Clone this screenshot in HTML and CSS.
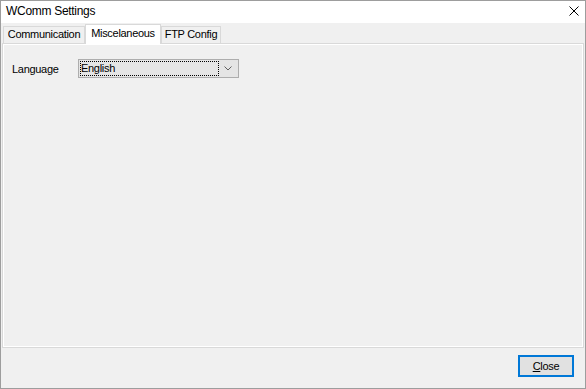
FILE: index.html
```html
<!DOCTYPE html>
<html lang="en">
<head>
    <meta charset="UTF-8">
    <title>WComm Settings</title>
    <link rel="stylesheet" href="styles.css">
</head>
<body>
    <div class="window">
        <div class="titlebar">
            <span class="title">WComm Settings</span>
            <svg class="close-x" width="10" height="10" viewBox="0 0 10 10">
                <path d="M0.5 0.5 L9.5 9.5 M9.5 0.5 L0.5 9.5" stroke="#000" stroke-width="1" fill="none"/>
            </svg>
        </div>

        <!-- tab headers -->
        <div class="tabs">
            <div class="tab tab-comm">Communication</div>
            <div class="tab tab-misc active">Miscelaneous</div>
            <div class="tab tab-ftp">FTP Config</div>
        </div>

        <div class="page">
            <div class="field">
                <label class="field-label">Language</label>
                <div class="combo">
                    <span class="combo-value">English</span>
                    <svg class="combo-arrow" width="8" height="5" viewBox="0 0 8 5">
                        <polyline points="0.5,0.5 4,4 7.5,0.5" stroke="#606060" stroke-width="1" fill="none"/>
                    </svg>
                </div>
            </div>
        </div>

        <div class="footer">
            <button class="btn-close"><u>C</u>lose</button>
        </div>
    </div>
</body>
</html>
```

FILE: styles.css
```css
* {
    box-sizing: border-box;
}

body {
    margin: 0;
    font-family: 'Liberation Sans', Arial, sans-serif;
    font-size: 11px;
    letter-spacing: -0.3px;
    color: #000;
    background: #f0f0f0;
}

.window {
    width: 586px;
    height: 389px;
    border: 1px solid #9d9d9d;
    background: #f0f0f0;
    display: flex;
    flex-direction: column;
}

.titlebar {
    height: 22px;
    flex: none;
    background: #fff;
    display: flex;
    justify-content: space-between;
    padding: 0 6px 0 5px;
}

.title {
    font-size: 12px;
    line-height: 21px;
}

.close-x {
    margin-top: 5px;
}

.tabs {
    height: 19px;
    flex: none;
    margin-top: 1px;
    padding-left: 2px;
    display: flex;
    align-items: flex-end;
}

.tab {
    height: 17px;
    border: 1px solid #d9d9d9;
    border-bottom: none;
    background: #f0f0f0;
    text-align: center;
    line-height: 15px;
}

.tab.active {
    height: 20px;
    margin-bottom: -1px;
    background: #fff;
    line-height: 16px;
    padding-bottom: 2px;
    position: relative;
    z-index: 1;
}

.tab-comm { width: 82px; }
.tab-misc { width: 76px; }
.tab-ftp { width: 60px; }

.page {
    flex: 1;
    margin: 0 1px;
    border: 1px solid #d9d9d9;
    box-shadow: inset 0 0 0 1px #fff;
    padding: 15px 0 0 9px;
}

.field {
    display: flex;
    align-items: center;
}

.field-label {
    width: 66px;
}

.combo {
    width: 161px;
    height: 19px;
    border: 1px solid #adadad;
    background: #e5e5e5;
    display: flex;
    align-items: center;
}

.combo-value {
    width: 139px;
    height: 15px;
    margin-left: 1px;
    border: 1px dotted #000;
    line-height: 13px;
    padding-left: 0;
}

.combo-arrow {
    margin-left: 5px;
}

.footer {
    height: 40px;
    flex: none;
    display: flex;
    justify-content: flex-end;
    padding: 7px 11px 0 0;
}

.btn-close {
    width: 56px;
    height: 22px;
    padding: 0;
    border: 1px solid #0078d7;
    box-shadow: inset 0 0 0 1px #0078d7;
    background: #e1e1e1;
    font-family: 'Liberation Sans', Arial, sans-serif;
    font-size: 11px;
    letter-spacing: -0.3px;
    color: #000;
}
```
